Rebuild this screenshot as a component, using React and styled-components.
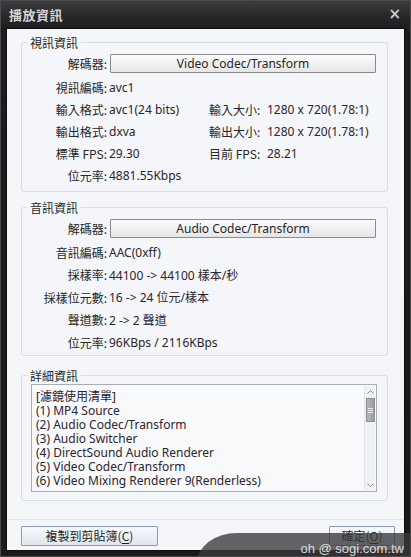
import React from "react";
import styled, { createGlobalStyle } from "styled-components";

const GlobalStyle = createGlobalStyle`
  html, body {
    margin: 0;
    padding: 0;
    background: #1b1b1b;
  }
  * {
    box-sizing: border-box;
  }
`;

const fonte = `"Segoe UI", "Noto Sans", "Noto Sans CJK TC", sans-serif`;

const Janela = styled.div`
  position: relative;
  width: 411px;
  height: 557px;
  display: flex;
  flex-direction: column;
  background: linear-gradient(180deg, #3c3c3e 0px, #2a2a2c 14px, #1c1c1e 28px, #1a1a1a 100%);
  border: 1px solid #4a4a4a;
  overflow: hidden;
  font-family: ${fonte};
  font-size: 12px;
  color: #262626;
`;

const BarraTitulo = styled.div`
  height: 27px;
  display: flex;
  align-items: center;
  justify-content: space-between;
  padding: 0 9px 0 8px;
`;

const Titulo = styled.span`
  font-family: "Noto Sans CJK TC", sans-serif;
  font-weight: 700;
  font-size: 13px;
  color: #d6d6d6;
  letter-spacing: 0.5px;
`;

const Fechar = styled.span`
  font-family: "DejaVu Sans", sans-serif;
  font-weight: 700;
  font-size: 15px;
  color: #c8c8c8;
  line-height: 1;
`;

const Corpo = styled.div`
  flex: 1;
  margin: 0 5px;
  background: #f4f6f9;
  border: 1px solid #0e0e0e;
  display: flex;
  flex-direction: column;
  padding: 6px 16px 0 14px;
`;

const Grupo = styled.fieldset`
  margin: 0;
  padding: 0;
  border: 1px solid #d7dde4;
  border-radius: 3px;
  min-width: 0;
  height: ${(p) => p.$altura}px;
  margin-top: ${(p) => p.$topo || 0}px;
`;

const Legenda = styled.legend`
  margin-left: 5px;
  padding: 0 3px;
  font-family: "Noto Sans CJK TC", sans-serif;
  font-size: 12px;
  line-height: 15px;
  color: #262626;
`;

const Grade = styled.div`
  display: grid;
  grid-template-columns: 87px 100px 58px 1fr;
  grid-template-rows: 26px;
  grid-auto-rows: ${(p) => p.$linha}px;
  align-items: center;
`;

const Rotulo = styled.span`
  font-family: "Noto Sans CJK TC", sans-serif;
  text-align: ${(p) => (p.$direita ? "left" : "right")};
  white-space: nowrap;
  padding-right: 2px;
`;

const Valor = styled.span`
  font-family: ${fonte};
  white-space: nowrap;
  color: #2e242e;
  grid-column: ${(p) => p.$span || "auto"};
`;

const LinhaDecoder = styled.div`
  grid-column: 2 / 5;
  display: flex;
  padding-right: 11px;
`;

const BotaoDecoder = styled.button`
  flex: 1;
  height: 19px;
  margin-left: 1px;
  border: 1px solid #8a8a8a;
  border-radius: 1px;
  background: linear-gradient(180deg, #fbfbfb 0%, #f1f1f1 50%, #e6e6e6 100%);
  font-family: ${fonte};
  font-size: 12px;
  color: #262626;
  padding: 0;
`;

const Lista = styled.div`
  margin: 1px 10px 0 9px;
  height: 108px;
  border: 1px solid #a9adb2;
  background: #f8f9fb;
  display: flex;
`;

const ListaTexto = styled.div`
  flex: 1;
  padding: 5px 0 0 4px;
  font-family: ${fonte};
  font-size: 12px;
  line-height: 14px;
  color: #2e242e;
  white-space: nowrap;
  overflow: hidden;
`;

const Rolagem = styled.div`
  width: 11px;
  margin: 1px 1px 1px 0;
  border-left: 1px solid #e2e4e8;
  background: #f0f1f3;
  display: flex;
  flex-direction: column;
`;

const Seta = styled.div`
  height: 11px;
  display: flex;
  align-items: center;
  justify-content: center;
`;

const Trilho = styled.div`
  flex: 1;
`;

const Polegar = styled.div`
  height: 24px;
  margin: 1px 0 0 1px;
  background: linear-gradient(90deg, #b4b6ba, #9a9ca0);
  border: 1px solid #8e9094;
  display: flex;
  flex-direction: column;
  align-items: center;
  justify-content: center;
  gap: 1px;

  span {
    width: 5px;
    height: 1px;
    background: #e8e8e8;
  }
`;

const Rodape = styled.div`
  margin: 18px -16px 0 -14px;
  border-top: 1px solid #e2e6eb;
  flex: 1;
  display: flex;
  justify-content: space-between;
  align-items: flex-start;
  padding: 6px 9px 0 14px;
`;

const BotaoRodape = styled.button`
  height: 20px;
  width: ${(p) => p.$largura}px;
  border: 1px solid #8a9bb4;
  border-radius: 1px;
  background: linear-gradient(180deg, #f7f9fc 0%, #eceff4 50%, #e1e6ed 100%);
  font-family: "Noto Sans CJK TC", sans-serif;
  font-size: 12px;
  line-height: 15px;
  color: #1f1f1f;
  padding: 0 0 2px;

  u {
    text-underline-offset: 2px;
  }
`;

const MolduraBaixo = styled.div`
  height: 5px;
`;

const MarcaDagua = styled.div`
  position: absolute;
  left: 196px;
  right: -20px;
  bottom: -20px;
  height: 43px;
  background: rgba(58, 58, 60, 0.78);
  border-top-left-radius: 40px 30px;
  display: flex;
  justify-content: flex-end;
  padding: 9px 26px 0 0;
  font-family: "Liberation Sans", Arial, sans-serif;
  font-size: 13px;
  line-height: 13px;
  color: #dadada;
`;

const linhasDetalhe = [
  "[濾鏡使用清單]",
  "(1) MP4 Source",
  "(2) Audio Codec/Transform",
  "(3) Audio Switcher",
  "(4) DirectSound Audio Renderer",
  "(5) Video Codec/Transform",
  "(6) Video Mixing Renderer 9(Renderless)",
];

export default function App() {
  return (
    <>
      <GlobalStyle />
      <Janela>
        <BarraTitulo>
          <Titulo>播放資訊</Titulo>
          <Fechar>×</Fechar>
        </BarraTitulo>
        <Corpo>
          <Grupo $altura={157}>
            <Legenda>視訊資訊</Legenda>
            <Grade $linha={22}>
              <Rotulo>解碼器:</Rotulo>
              <LinhaDecoder>
                <BotaoDecoder>Video Codec/Transform</BotaoDecoder>
              </LinhaDecoder>
              <Rotulo>視訊編碼:</Rotulo>
              <Valor $span="2 / 5">avc1</Valor>
              <Rotulo>輸入格式:</Rotulo>
              <Valor>avc1(24 bits)</Valor>
              <Rotulo $direita>輸入大小:</Rotulo>
              <Valor>1280 x 720(1.78:1)</Valor>
              <Rotulo>輸出格式:</Rotulo>
              <Valor>dxva</Valor>
              <Rotulo $direita>輸出大小:</Rotulo>
              <Valor>1280 x 720(1.78:1)</Valor>
              <Rotulo>標準 FPS:</Rotulo>
              <Valor>29.30</Valor>
              <Rotulo $direita>目前 FPS:</Rotulo>
              <Valor>28.21</Valor>
              <Rotulo>位元率:</Rotulo>
              <Valor $span="2 / 5">4881.55Kbps</Valor>
            </Grade>
          </Grupo>

          <Grupo $altura={156} $topo={8}>
            <Legenda>音訊資訊</Legenda>
            <Grade $linha={22.5}>
              <Rotulo>解碼器:</Rotulo>
              <LinhaDecoder>
                <BotaoDecoder>Audio Codec/Transform</BotaoDecoder>
              </LinhaDecoder>
              <Rotulo>音訊編碼:</Rotulo>
              <Valor $span="2 / 5">AAC(0xff)</Valor>
              <Rotulo>採樣率:</Rotulo>
              <Valor $span="2 / 5">44100 -&gt; 44100 樣本/秒</Valor>
              <Rotulo>採樣位元數:</Rotulo>
              <Valor $span="2 / 5">16 -&gt; 24 位元/樣本</Valor>
              <Rotulo>聲道數:</Rotulo>
              <Valor $span="2 / 5">2 -&gt; 2 聲道</Valor>
              <Rotulo>位元率:</Rotulo>
              <Valor $span="2 / 5">96KBps / 2116KBps</Valor>
            </Grade>
          </Grupo>

          <Grupo $altura={133} $topo={12}>
            <Legenda>詳細資訊</Legenda>
            <Lista>
              <ListaTexto>
                {linhasDetalhe.map((l) => (
                  <div key={l}>{l}</div>
                ))}
              </ListaTexto>
              <Rolagem>
                <Seta>
                  <svg width="7" height="4" viewBox="0 0 7 4">
                    <path d="M0.5 3.5 L3.5 0.5 L6.5 3.5" fill="none" stroke="#8a8c90" strokeWidth="1" />
                  </svg>
                </Seta>
                <Trilho>
                  <Polegar>
                    <span />
                    <span />
                    <span />
                  </Polegar>
                </Trilho>
                <Seta>
                  <svg width="7" height="4" viewBox="0 0 7 4">
                    <path d="M0.5 0.5 L3.5 3.5 L6.5 0.5" fill="none" stroke="#8a8c90" strokeWidth="1" />
                  </svg>
                </Seta>
              </Rolagem>
            </Lista>
          </Grupo>

          <Rodape>
            <BotaoRodape $largura={137}>
              複製到剪貼簿(<u>C</u>)
            </BotaoRodape>
            <BotaoRodape $largura={66}>
              確定(<u>O</u>)
            </BotaoRodape>
          </Rodape>
        </Corpo>
        <MolduraBaixo />
        <MarcaDagua>oh @ sogi.com.tw</MarcaDagua>
      </Janela>
    </>
  );
}
